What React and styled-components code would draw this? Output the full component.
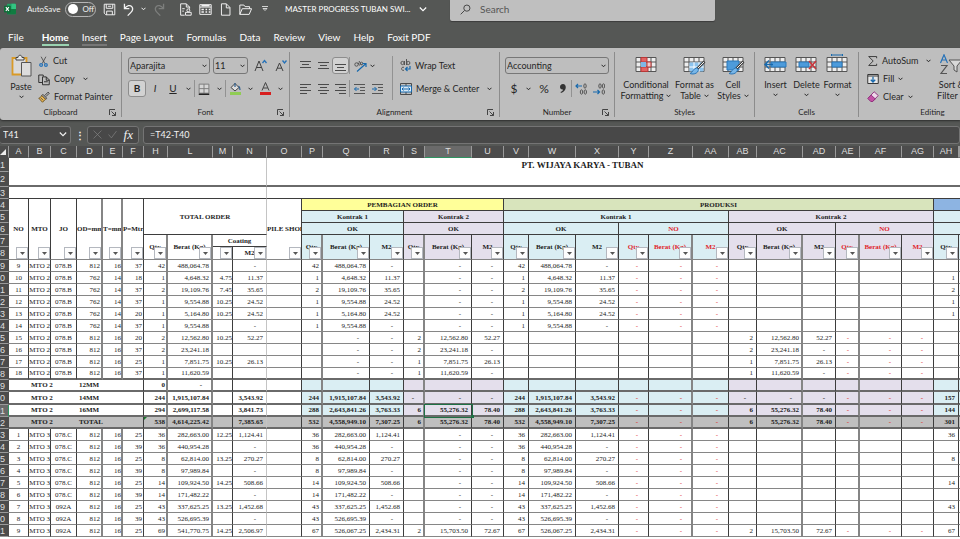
import React from "react";
import styled, { createGlobalStyle, css } from "styled-components";

const UI = `Lato, "Open Sans", sans-serif`;
const GREEN = "#1f7145";
const BLUE_FILL = "#daeef3";
const PURPLE_FILL = "#e4dfec";
const GREY_FILL = "#bfbfbf";
const RED = "#e0262c";

const Global = createGlobalStyle`
  * { box-sizing: border-box; }
  html, body { margin: 0; background: #fff; }
  button, input, select { font: inherit; color: inherit; margin: 0; padding: 0; border: 0; background: none; }
  svg { display: block; flex: none; }
`;

const Window = styled.div`
  height: 100vh;
  overflow: hidden;
  display: flex;
  flex-direction: column;
  font: 9px/12px ${UI};
  background: #555755;
  color: #f2f2f2;
`;

/* ---------- title bar ---------- */
const TitleBar = styled.header`
  display: flex;
  align-items: flex-start;
  height: 25px;
  padding-left: 4px;
`;
const TitleGroup = styled.div`
  display: flex;
  align-items: center;
  flex: none;
  height: 18px;
  gap: ${(p) => p.$gap || 8}px;
  width: ${(p) => p.$width}px;
`;
const AppLabel = styled.label`
  display: flex;
  align-items: center;
  gap: 5px;
  font-size: 8px;
  white-space: nowrap;
`;
const Toggle = styled.button`
  display: flex;
  align-items: center;
  gap: 4px;
  width: 31px;
  height: 15px;
  padding-left: 2px;
  border: 1px solid #b5b5b5;
  border-radius: 8px;
  font-size: 8px;
  &::before {
    content: "";
    width: 10px;
    height: 10px;
    border-radius: 50%;
    background: #fff;
  }
`;
const IconButton = styled.button`
  display: flex;
  align-items: center;
  justify-content: center;
  flex: none;
  width: ${(p) => p.$w || 12}px;
  height: 16px;
  opacity: ${(p) => (p.$off ? 0.25 : 1)};
`;
const DocTitle = styled.button`
  display: flex;
  align-items: center;
  gap: 8px;
  height: 18px;
  font-size: 8px;
  color: #fff;
  white-space: nowrap;
`;
const SearchBox = styled.label`
  display: flex;
  align-items: center;
  gap: 9px;
  flex: 0 0 265px;
  height: 21px;
  padding: 0 10px 3px;
  background: #bfbfbf;
  border-radius: 0 0 2px 2px;
  box-shadow: 0 1px 1px #3c3c3c;
  color: #444;
  input { flex: 1; min-width: 0; height: 17px; font-size: 10px; outline: none; }
  input::placeholder { color: #555; opacity: 1; }
`;

/* ---------- tabs ---------- */
const Tabs = styled.nav`
  display: flex;
  align-items: center;
  height: 23px;
  padding-left: 8px;
  gap: 13px;
  font-size: 10px;
`;
const Tab = styled.a`
  color: #fff;
  text-decoration: none;
  white-space: nowrap;
  line-height: 14px;
  padding-top: 3px;
  border-bottom: 2px solid ${(p) => p.$line || "transparent"};
  font-weight: ${(p) => (p.$on ? 700 : 400)};
  margin-right: ${(p) => (p.$first ? 5 : 0)}px;
`;

/* ---------- ribbon ---------- */
const Ribbon = styled.section`
  display: flex;
  flex: none;
  height: 72px;
  background: #bebebe;
  color: #262626;
  border-radius: 3px 0 0 3px;
  box-shadow: 0 1px 2px #2e2e2e;
  overflow: hidden;
  font-size: 9px;
`;
const Group = styled.div`
  flex: none;
  width: ${(p) => p.$width}px;
  margin: 4px 0 3px;
  display: flex;
  flex-direction: column;
  border-right: 1px solid #8c8c8c;
`;
const GroupBody = styled.div`
  flex: 1;
  display: flex;
  padding-left: ${(p) => p.$left || 0}px;
  gap: ${(p) => p.$gap || 0}px;
`;
const GroupFoot = styled.div`
  display: grid;
  grid-template-columns: 12px 1fr 12px;
  align-items: center;
  text-align: center;
  font-size: 8px;
  line-height: 10px;
`;
const Stack = styled.div`
  display: flex;
  flex-direction: column;
  gap: ${(p) => p.$gap || 0}px;
  padding-top: ${(p) => p.$top || 0}px;
`;
const Line = styled.div`
  display: flex;
  align-items: center;
  gap: ${(p) => p.$gap || 0}px;
  height: 17px;
`;
const Command = styled.button`
  display: flex;
  align-items: center;
  gap: 4px;
  height: ${(p) => p.$h || 18}px;
  white-space: nowrap;
  > span + svg { margin-left: 4px; }
`;
const BigCommand = styled.button`
  display: flex;
  flex-direction: column;
  align-items: center;
  flex: none;
  width: ${(p) => p.$w}px;
  padding-top: 2px;
  line-height: 11px;
  white-space: nowrap;
  svg + span { margin-top: 4px; }
  > svg:last-child { margin-top: 3px; }
`;
const CommandText = styled.span`
  display: flex;
  align-items: center;
  gap: 3px;
`;
const Tool = styled.button`
  display: flex;
  align-items: center;
  justify-content: center;
  flex: none;
  width: ${(p) => p.$w || 18}px;
  height: 17px;
  border-radius: 3px;
  font-size: ${(p) => p.$size || 11}px;
  line-height: 15px;
  ${(p) => p.$on && css`border: 1px solid #8d8d8d; background: #d2d2d2;`}
`;
const Divider = styled.span`
  flex: none;
  width: 1px;
  height: ${(p) => p.$h || 17}px;
  margin-top: ${(p) => p.$top || 0}px;
  background: #929292;
`;
const SelectBox = styled.label`
  position: relative;
  display: block;
  width: ${(p) => p.$w}px;
  select {
    appearance: none;
    width: 100%;
    height: 17px;
    padding: 0 1px;
    border: 1px solid #777;
    border-radius: 3px;
    font-size: 9px;
  }
  svg { position: absolute; right: 3px; top: 7px; pointer-events: none; }
`;

/* ---------- formula bar ---------- */
const FormulaBar = styled.div`
  display: flex;
  align-items: center;
  flex: none;
  height: 26px;
  padding-top: 3px;
  gap: 4px;
  font-size: 10px;
`;
const BarBox = styled.div`
  display: flex;
  align-items: center;
  justify-content: space-between;
  flex: ${(p) => (p.$grow ? "1" : "none")};
  width: ${(p) => (p.$grow ? "auto" : p.$w + "px")};
  height: 18px;
  padding: 0 ${(p) => p.$pad || 3}px;
  background: #484848;
  border: 1px solid #747474;
  border-radius: 3px;
  border-left-width: ${(p) => (p.$flush ? 0 : 1)}px;
  input { width: 100%; min-width: 0; height: 15px; font-size: 9px; outline: none; }
`;
const Fx = styled.span`
  font: italic 400 13px/14px "Liberation Serif", serif;
`;
const Dots = styled.span`
  width: 8px;
  text-align: center;
  font-weight: 700;
`;

/* ---------- sheet ---------- */
const SheetArea = styled.main`
  flex: 1;
  min-height: 0;
  overflow: hidden;
  background: #fff;
`;
const Sheet = styled.table`
  table-layout: fixed;
  width: 100%;
  min-width: 960px;
  border-collapse: separate;
  border-spacing: 0;
  color: #1c1c1c;
  font: 7px/10px "Liberation Serif", serif;
`;
const Col = styled.col`
  width: ${(p) => p.$w}px;
`;
const HeadRow = styled.tr`
  height: 12px;
`;
const Row = styled.tr`
  height: ${(p) => p.$h || 12}px;
`;
const ColHead = styled.th`
  padding: 0;
  background: ${(p) => (p.$on ? "#6a6a6a" : "#4c4c4c")};
  border-right: 1px solid #9a9a9a;
  border-bottom: 1px solid ${(p) => (p.$on ? "#2f9461" : "#4c4c4c")};
  color: #dedede;
  font: 400 9px/11px "Liberation Sans", sans-serif;
  overflow: hidden;
`;
const RowHead = styled.th`
  padding: 0;
  overflow: hidden;
  text-align: left;
  background: ${(p) => (p.$on ? "#6a6a6a" : "#4c4c4c")};
  border-right: 1px solid ${(p) => (p.$on ? "#2f9461" : "#4c4c4c")};
  border-bottom: 1px solid #9a9a9a;
  color: #dedede;
  font: 400 9px/10px "Liberation Sans", sans-serif;
`;
const Cell = styled.td`
  position: relative;
  padding: 0 ${(p) => p.$pad || 0}px 0 0;
  padding-left: ${(p) => (p.$align === "left" ? 2 : 0)}px;
  overflow: visible;
  white-space: nowrap;
  text-align: ${(p) => p.$align || "right"};
  font-weight: ${(p) => (p.$bold ? 700 : 400)};
  color: ${(p) => (p.$red ? RED : "inherit")};
  background: ${(p) => p.$fill || "transparent"};
  border-right: ${(p) =>
    p.$edge === "none" ? "0" : p.$edge === "soft" ? "1px solid #c4c4c4" : p.$edge === "wide" ? "2px solid #858585" : "1px solid #3d3d3d"};
  border-bottom: ${(p) =>
    p.$base === "none" ? "0" : p.$base === "thick" ? "2px solid #6a6a6a" : p.$base === "dark" ? "1px solid #3d3d3d" : "1px solid #868686"};
  ${(p) =>
    p.$selected &&
    css`
      outline: 1px solid ${GREEN};
      z-index: 1;
      &::after {
        content: "";
        position: absolute;
        right: -3px;
        bottom: -3px;
        width: 3px;
        height: 3px;
        background: ${GREEN};
      }
    `}
  ${(p) =>
    p.$flag &&
    css`
      &::before {
        content: "";
        position: absolute;
        left: 0;
        top: 0;
        border-top: 3px solid #197a2c;
        border-right: 3px solid transparent;
      }
    `}
`;
const HeadCell = styled(Cell).attrs({ as: "th", $align: "center", $bold: true })`
  overflow: hidden;
`;
const TitleCell = styled(HeadCell)`
  font-size: 9px;
  overflow: visible;
`;
const Filter = styled.button`
  position: absolute;
  right: 0;
  bottom: 0;
  width: 12px;
  height: 12px;
  background: #fdfdfd;
  border: 1px solid #b4b8bf;
  display: flex;
  align-items: center;
  justify-content: center;
`;

/* ---------- icons ---------- */
const Chevron = ({ s = 5, c = "currentColor" }) => (
  <svg width={s} height={s - 1} viewBox="0 0 10 7" fill="none" stroke={c} strokeWidth={s > 5 ? 1.4 : 2}>
    <path d="M1 1l4 4 4-4" />
  </svg>
);
const Ico = ({ w = 13, h = 13, vb = "0 0 16 16", c = "currentColor", sw = 1.2, children }) => (
  <svg width={w} height={h} viewBox={vb} fill="none" stroke={c} strokeWidth={sw}>
    {children}
  </svg>
);
const ExcelLogo = () => (
  <Ico w={12} h={12} sw={0}>
    <rect x="4" y="1" width="12" height="14" rx="1" fill="#21a366" />
    <path d="M10 1h5l1 1v6h-6z" fill="#33c481" />
    <path d="M4 8h12v6l-1 1H4z" fill="#107c41" />
    <rect x="0" y="3.500" width="9" height="9" rx="1" fill="#0f6d39" />
    <path d="M2.500 5.500l4 5M6.500 5.500l-4 5" stroke="#fff" strokeWidth="1.500" />
  </Ico>
);
const SaveIcon = () => (
  <Ico><path d="M1.500 1.500h13v13h-11l-2-2zM4 1.500v5h8v-5M4.500 14.500V10h7v4.500M6 4h4" /></Ico>
);
const UndoIcon = () => (
  <Ico sw={1.6}><path d="M3 1v6h6M3 7c3-4 7-5 9-2.500 2 2.500 1 5-1 7l-4 4" /></Ico>
);
const RedoIcon = () => (
  <Ico sw={1.6}><path d="M13 1v6H7M13 7c-3-4-7-5-9-2.500-2 2.500-1 5 1 7l4 4" /></Ico>
);
const PrintDocIcon = () => (
  <Ico>
    <path d="M7 15H2V1h7l4 4v2M9 1v4h4M4 7h3M4 10h2" />
    <circle cx="11.500" cy="9" r="1.800" />
    <path d="M8 11.500h7v3.500H8z" />
  </Ico>
);
const FormIcon = () => (
  <Ico>
    <path d="M1 2h14v12H1zM1 5h14" />
    <path d="M3 8h3M8 8h2M12 8h2M3 11h3M8 11h2M12 11h2M3 3.500h10" strokeWidth="1.800" />
  </Ico>
);
const NewDocIcon = () => (<Ico><path d="M3 1h6l4.500 4.500V15H3zM9 1v5h4.500" /></Ico>);
const OpenIcon = () => (
  <Ico><path d="M1 14V2.500h5l1.500 2H13V7M1 14l3-7h11.500l-3 7z" /></Ico>
);
const CustomizeIcon = () => (<Ico w={8} h={8} sw={1.6}><path d="M2 3h12M4 7l4 4 4-4z" /></Ico>);
const SearchIcon = () => (
  <Ico w={11} h={11} sw={1.400}><circle cx="10" cy="6" r="4.500" /><path d="M6.500 9.500L1 15" /></Ico>
);
const PasteIcon = () => (
  <svg width="21" height="23" viewBox="0 0 21 23" fill="none">
    <path d="M1.500 4h14v16.500h-14z" fill="#d9d9d9" stroke="#d99a26" strokeWidth="1.800" />
    <path d="M5 6V3.500h2c0-3 4-3 4 0h2V6z" fill="#e8e8e8" stroke="#444" />
    <path d="M10.500 8.500h9.500v13.500h-9.500z" fill="#dcdcdc" stroke="#555" />
  </svg>
);
const CutIcon = () => (
  <Ico w={11}>
    <path d="M4.500 1l5.500 10M11.500 1L6 11" stroke="#444" />
    <circle cx="4.500" cy="13" r="2" stroke="#2672b8" strokeWidth="1.800" />
    <circle cx="11.500" cy="13" r="2" stroke="#2672b8" strokeWidth="1.800" />
  </Ico>
);
const CopyIcon = () => (
  <Ico w={12}><path d="M6 12H1V2h6v2M6 4.500h5l4 4V15H6zM11 4.500V9h4M8 11h5" /></Ico>
);
const BrushIcon = () => (
  <Ico w={12} h={12}>
    <path d="M9 6l4.500-4.500 1.500 1.500L10.500 7.500M6.500 4.500l5 5-1.500 1.500-5-5z" stroke="#333" />
    <path d="M5 6l5 5-4 4L1 9.500C3 9 4 8 5 6z" fill="#ebb650" stroke="#6b521f" />
    <path d="M3.500 9l3.500 3.500" stroke="#555" />
  </Ico>
);
const FontStep = ({ up }) => (
  <svg width="13" height="13" viewBox="0 0 13 13" fill="none" stroke="#404040">
    <path d={up ? "M1 12L5 2l4 10M2.500 8.500h5" : "M2 12l3.500-8L9 12M3.200 9.200h4.600"} />
    <path d={up ? "M8.500 4l2-2.500 2 2.500" : "M8.500 1.500l2 2.500 2-2.500"} stroke="#2672b8" strokeWidth="1.300" />
  </svg>
);
const BordersIcon = () => (
  <Ico w={12} h={12}>
    <path d="M1.500 1.500h13v12h-13zM8 1.500v12M1.500 7.500h13" stroke="#777" fill="#d6d6d6" />
    <path d="M1 15h14" stroke="#222" strokeWidth="1.800" />
  </Ico>
);
const FillIcon = () => (
  <svg width="13" height="13" viewBox="0 0 13 13" fill="none">
    <path d="M2 5.500l4-4 4 4-4 3.500z" fill="#ddd" stroke="#444" />
    <path d="M6 1v4M9.500 4c1.500 1 1.500 2 1.500 4" stroke="#285a8c" strokeWidth="1.200" />
    <path d="M1 11.500h11" stroke="#90cc54" strokeWidth="3" />
  </svg>
);
const ColorIcon = () => (
  <svg width="13" height="13" viewBox="0 0 13 13" fill="none">
    <path d="M3 8.500l3.500-8 3.500 8M4.300 6h4.400" stroke="#444" />
    <path d="M1 11.500h11" stroke="#d81f1f" strokeWidth="3" />
  </svg>
);
const LinesIcon = ({ d }) => (
  <svg width="11" height="11" viewBox="0 0 11 11" stroke="#4a4a4a" fill="none"><path d={d} /></svg>
);
const IndentIcon = ({ right }) => (
  <svg width="11" height="11" viewBox="0 0 11 11" stroke="#555" fill="none">
    <path d="M0 1.500h11M6 4.500h5M6 7.500h5M0 10.500h11" />
    <path d={right ? "M0 6h4.500M2.500 4l2 2-2 2" : "M5 6H.5M2.500 4l-2 2 2 2"} stroke="#1769ad" />
  </svg>
);
const OrientIcon = () => (
  <svg width="13" height="12" viewBox="0 0 13 12" fill="none" stroke="#555">
    <circle cx="2.500" cy="4.500" r="1.700" /><path d="M4 2.500l1.500 3M5 1l2.500 4" /><circle cx="7.500" cy="3.500" r="1.300" />
    <path d="M3 11.500l9-8M8.500 3.500H12V7" stroke="#1769ad" strokeWidth="1.200" />
  </svg>
);
const WrapIcon = () => (
  <svg width="11" height="13" viewBox="0 0 11 13" fill="none" stroke="#555">
    <circle cx="2.500" cy="4" r="1.600" /><path d="M4.500 2v4M6.500 0v6" /><circle cx="8.300" cy="4" r="1.600" />
    <path d="M4 8.300c-3-1-3.500 3.700 0 3" />
    <path d="M10 7v3H5.500M7.500 8l-2 2 2 2" stroke="#1769ad" strokeWidth="1.200" />
  </svg>
);
const MergeIcon = () => (
  <svg width="12" height="12" viewBox="0 0 12 12" fill="none" stroke="#4a4a4a">
    <path d="M.5.5h11v11H.5zM6 .5v2.500M6 9v2.500" />
    <path d="M.5 3h11v6H.5z" fill="#d9e9f6" stroke="#1769ad" />
    <path d="M2 6h8M3.500 4.500L2 6l1.500 1.500M8.500 4.500L10 6 8.500 7.500" stroke="#1769ad" />
  </svg>
);
const DecimalIcon = ({ inc }) => (
  <svg width="12" height="12" viewBox="0 0 12 12" fill="none" stroke="#555">
    <ellipse cx={inc ? 10 : 7} cy="3" rx="1.200" ry="2.200" />
    {!inc && <ellipse cx="10.500" cy="3" rx="1.200" ry="2.200" />}
    {inc && <ellipse cx="6.500" cy="9" rx="1.200" ry="2.200" />}
    <ellipse cx="10.300" cy="9" rx="1.200" ry="2.200" />
    <path d={inc ? "M7 3H1M3 1L1 3l2 2" : "M0 9h6.500M4.500 7l2 2-2 2"} stroke="#1769ad" strokeWidth="1.200" />
  </svg>
);
const GridIcon = ({ children }) => (
  <svg width="23" height="21" viewBox="0 0 23 21" fill="none">
    <path d="M1 3.500h20v14H1z" fill="#eee" stroke="#555" />
    <path d="M1 8h20M1 13h20M6 3.500v14M11 3.500v14M16 3.500v14" stroke="#555" />
    {children}
  </svg>
);
const Brush = () => (
  <>
    <path d="M21.500 7.500L14 15" stroke="#444" strokeWidth="2.600" />
    <path d="M21 8l-6.500 6.500" stroke="#eee" />
    <path d="M13.500 14c2 .5 2.500 2 1 4-1.500 2-5 2.500-7.500 1.500 2.500-.5 3-5 6.500-5.500z" fill="#79b6e6" stroke="#2b78ba" />
  </>
);
const CondIcon = () => (
  <GridIcon>
    <path d="M6 3.500h6V8H6zM6 13h7v4.500H6z" fill="#e26464" stroke="#b93737" />
    <path d="M12 8h4v5h-4z" fill="#f3c9c9" stroke="#b93737" />
    <path d="M6 8h5v5H6z" fill="#7fb7e6" />
  </GridIcon>
);
const TableIcon = () => (<GridIcon><path d="M6.500 8.500h14v9h-14z" fill="#8cc3ee" /><path d="M6 13h15M11 8v10M16 8v10" stroke="#fff" /><Brush /></GridIcon>);
const StylesIcon = () => (<GridIcon><path d="M5 7h12v9H5z" fill="#4d9bdb" stroke="#2b78ba" /><Brush /></GridIcon>);
const InsertIcon = () => (<GridIcon><path d="M7 8h15v5H7z" fill="#4d9bdb" stroke="#2b78ba" /><path d="M1 10.500h8M5 6.500l-4 4 4 4" stroke="#1769ad" strokeWidth="1.500" /></GridIcon>);
const DeleteIcon = () => (<GridIcon><path d="M4 8h10v5H4z" fill="#4d9bdb" stroke="#2b78ba" /><path d="M14 7l7 8M21 7l-7 8" stroke="#c8353b" strokeWidth="1.600" /></GridIcon>);
const FormatIcon = () => (<GridIcon><path d="M6 8h10v5H6z" fill="#4d9bdb" stroke="#2b78ba" /><path d="M5.500 1h11M5.500 0v2M16.500 0v2" stroke="#1769ad" /></GridIcon>);
const SigmaIcon = () => (<Ico w={11} h={12}><path d="M14 4V1.500H2.500L9 8l-6.500 6.500H14V12" /></Ico>);
const FillDownIcon = () => (
  <Ico w={12} h={12}><path d="M1 2h14v12H1z" fill="#e8e8e8" /><path d="M1 4h14" /><path d="M8 5v7M5 9l3 3 3-3" stroke="#1769ad" strokeWidth="1.700" /></Ico>
);
const EraserIcon = () => (
  <Ico w={12} h={12}>
    <path d="M9.500 1l5.500 5-7.500 8L2 9z" fill="#eed9ea" stroke="#8b2a78" />
    <path d="M5.500 5.500l5.500 5-3.500 3.500H5L1 10z" fill="#c452a6" stroke="#8b2a78" />
  </Ico>
);
const SortIcon = () => (
  <svg width="24" height="21" viewBox="0 0 24 21" fill="none">
    <path d="M1.500 9L5 .8 8.500 9M2.800 6h4.400" stroke="#2672b8" strokeWidth="1.200" />
    <path d="M2 11.500h6l-6 8h6" stroke="#555" strokeWidth="1.200" />
    <path d="M10 6h13l-5 6v6l-3-2v-4z" fill="#d8d8d8" stroke="#555" />
  </svg>
);
const Launcher = () => (
  <svg width="7" height="7" viewBox="0 0 7 7" fill="none" stroke="#444"><path d="M.5 6V.5H6M2.500 2.500l4 4M6.500 3v3.500H3" /></svg>
);

function RibbonGroup({ width, left, gap, name, launch, children }) {
  return (
    <Group $width={width}>
      <GroupBody $left={left} $gap={gap}>{children}</GroupBody>
      <GroupFoot>
        <span />
        <span>{name}</span>
        {launch ? <button aria-label={name + " settings"}><Launcher /></button> : <span />}
      </GroupFoot>
    </Group>
  );
}
function Big({ w, icon, text, second }) {
  return (
    <BigCommand $w={w}>
      {icon}
      <span>{text}</span>
      {second ? <CommandText>{second}<Chevron /></CommandText> : <Chevron />}
    </BigCommand>
  );
}
function Picker({ w, label, value }) {
  return (
    <SelectBox $w={w}>
      <select aria-label={label} defaultValue={value}><option>{value}</option></select>
      <Chevron />
    </SelectBox>
  );
}

/* ---------- sheet data ---------- */
const COLS = [
  ["A", 20], ["B", 22], ["C", 26], ["D", 26, 1], ["E", 20, 1], ["F", 21], ["H", 24, 1], ["L", 45, 1], ["M", 20], ["N", 34],
  ["O", 35], ["P", 21, 1], ["Q", 47], ["R", 34], ["S", 21, 1], ["T", 47], ["U", 32], ["V", 25], ["W", 47], ["X", 43],
  ["Y", 30], ["Z", 44, 1], ["AA", 36], ["AB", 28], ["AC", 46, 1], ["AD", 33], ["AE", 24, 1], ["AF", 42], ["AG", 32], ["AH", 25],
];
const NONE = ["", "", ""];
const DASH = ["-", "-", "-"];
const rest = (k1, k2, ah) => [
  ...(k1 || ["", "-", "-"]), ...(k2 || ["", "-", "-"]),
  ...(k1 || NONE), ...(k1 ? DASH : NONE), ...(k2 || NONE), ...(k2 ? DASH : NONE), ah,
];
const item = (row, no, mto, jo, od, t, p, h, l, m, n, k1, k2, ah = "") => ({
  row, cells: [no, mto, jo, od, t, p, h, l, m, n, "", ...rest(k1, k2, ah)],
});
const first = [
  item(29, 9, "MTO 2", "078.B", 812, 16, 37, 42, "488,064.78", "", "-", ["42", "488,064.78", "-"]),
  item(30, 10, "MTO 2", "078.B", 762, 14, 18, 1, "4,648.32", "4.75", "11.37", ["1", "4,648.32", "11.37"], null, "1"),
  item(31, 11, "MTO 2", "078.B", 762, 14, 37, 2, "19,109.76", "7.45", "35.65", ["2", "19,109.76", "35.65"], null, "2"),
  item(32, 12, "MTO 2", "078.B", 762, 14, 37, 1, "9,554.88", "10.25", "24.52", ["1", "9,554.88", "24.52"], null, "1"),
  item(33, 13, "MTO 2", "078.B", 762, 14, 20, 1, "5,164.80", "10.25", "24.52", ["1", "5,164.80", "24.52"], null, "1"),
  item(34, 14, "MTO 2", "078.B", 762, 14, 37, 1, "9,554.88", "", "-", ["1", "9,554.88", "-"]),
  item(35, 15, "MTO 2", "078.B", 812, 16, 20, 2, "12,562.80", "10.25", "52.27", null, ["2", "12,562.80", "52.27"]),
  item(36, 16, "MTO 2", "078.B", 812, 16, 37, 2, "23,241.18", "", "", null, ["2", "23,241.18", "-"]),
  item(37, 17, "MTO 2", "078.B", 812, 16, 25, 1, "7,851.75", "10.25", "26.13", null, ["1", "7,851.75", "26.13"]),
  item(38, 18, "MTO 2", "078.B", 812, 16, 37, 1, "11,620.59", "", "", null, ["1", "11,620.59", "-"]),
];
const sum = (row, label, own, k1, k2, red, ah) => ({
  row, label, cells: [...own, "", ...k1, ...k2, ...k1, ...red, ...k2, ...red, ah],
});
const totals = [
  sum(39, "12MM", ["0", "-", "", ""], NONE, NONE, NONE, ""),
  sum(40, "14MM", ["244", "1,915,107.84", "", "3,543.92"], ["244", "1,915,107.84", "3,543.92"], DASH, DASH, "157"),
  sum(41, "16MM", ["294", "2,699,117.58", "", "3,841.73"], ["288", "2,643,841.26", "3,763.33"], ["6", "55,276.32", "78.40"], DASH, "144"),
  sum(42, "TOTAL", ["538", "4,614,225.42", "", "7,385.65"], ["532", "4,558,949.10", "7,307.25"], ["6", "55,276.32", "78.40"], DASH, "301"),
];
const second = [
  item(43, 1, "MTO 3", "078.C", 812, 16, 25, 36, "282,663.00", "12.25", "1,124.41", ["36", "282,663.00", "1,124.41"], null, "36"),
  item(44, 2, "MTO 3", "078.C", 812, 16, 39, 36, "440,954.28", "", "-", ["36", "440,954.28", "-"]),
  item(45, 3, "MTO 3", "078.C", 812, 16, 25, 8, "62,814.00", "13.25", "270.27", ["8", "62,814.00", "270.27"], null, "8"),
  item(46, 4, "MTO 3", "078.C", 812, 16, 39, 8, "97,989.84", "", "-", ["8", "97,989.84", "-"]),
  item(47, 5, "MTO 3", "078.C", 812, 16, 25, 14, "109,924.50", "14.25", "508.66", ["14", "109,924.50", "508.66"], null, "14"),
  item(48, 6, "MTO 3", "078.C", 812, 16, 39, 14, "171,482.22", "", "-", ["14", "171,482.22", "-"]),
  item(49, 7, "MTO 3", "092A", 812, 16, 25, 43, "337,625.25", "13.25", "1,452.68", ["43", "337,625.25", "1,452.68"], null, "43"),
  item(50, 8, "MTO 3", "092A", 812, 16, 39, 43, "526,695.39", "", "-", ["43", "526,695.39", "-"]),
  item(51, 9, "MTO 3", "092A", 812, 16, 25, 69, "541,770.75", "14.25", "2,506.97", ["67", "526,067.25", "2,434.31"], ["2", "15,703.50", "72.67"], "67"),
];

const edgeOf = (i) => (COLS[i][0] === "N" ? "soft" : COLS[i][2] ? "wide" : "thin");
const isRed = (i) => (i >= 20 && i <= 22) || (i >= 26 && i <= 28);
const tintOf = (i) => {
  if (i < 11) return undefined;
  if ((i >= 14 && i <= 16) || (i >= 23 && i <= 28)) return PURPLE_FILL;
  return BLUE_FILL;
};
const padOf = (i, v) => {
  if (v === "-") return COLS[i][2] ? 9 : 10;
  if (i === 3 || i === 5 || i === 6) return 1;
  if (i === 4 || i === 8 || i === 1) return 0;
  return COLS[i][2] ? 2 : 3;
};

function DataRow({ data, base }) {
  return (
    <Row>
      <RowHead scope="row">{data.row % 10}</RowHead>
      {data.cells.map((v, i) => (
        <Cell
          key={i}
          $align={i === 0 || i === 2 ? "center" : undefined}
          $pad={i === 0 || i === 2 ? 0 : padOf(i, v)}
          $red={isRed(i)}
          $edge={edgeOf(i)}
          $base={base}
        >
          {v}
        </Cell>
      ))}
      <Cell $edge="none" $base={base} />
    </Row>
  );
}
function TotalRow({ data }) {
  const grey = data.label === "TOTAL";
  const own = grey ? GREY_FILL : undefined;
  return (
    <Row $h={data.row === 40 ? 13 : 12}>
      <RowHead scope="row" $on={data.row === 41}>{data.row % 10}</RowHead>
      <Cell $fill={own} $edge="none" $base="thick" />
      <Cell colSpan={2} $fill={own} $edge="none" $base="thick" $align="left" $bold>MTO 2</Cell>
      <Cell colSpan={3} $fill={own} $base="thick" $align="left" $bold>{data.label}</Cell>
      {data.cells.map((v, k) => {
        const i = k + 6;
        return (
          <Cell
            key={i}
            $bold
            $pad={padOf(i, v)}
            $red={isRed(i)}
            $edge={edgeOf(i)}
            $base="thick"
            $fill={grey ? GREY_FILL : tintOf(i)}
            $selected={data.row === 41 && COLS[i][0] === "T"}
            $flag={grey && i === 6}
          >
            {v}
          </Cell>
        );
      })}
      <Cell $edge="none" $base="thick" $fill={grey ? GREY_FILL : BLUE_FILL} />
    </Row>
  );
}
const FilterButton = ({ col }) => (
  <Filter aria-label={"Filter column " + col}>
    <svg width="5" height="3" viewBox="0 0 5 3"><path d="M0 0h5L2.500 3z" fill="#555" /></svg>
  </Filter>
);

const measure = ["Qty", "Berat (Kg)", "M2"];

function HeadingRows() {
  const left = ["NO", "MTO", "JO", "OD=mm", "T=mm", "P=Mtr"];
  return (
    <>
      <Row $h={14}>
        <RowHead>1</RowHead>
        <Cell colSpan={10} $edge="soft" $base="none" />
        <Cell colSpan={6} $edge="none" $base="none" />
        <TitleCell colSpan={6} $edge="none" $base="none">PT. WIJAYA KARYA - TUBAN</TitleCell>
        <Cell colSpan={9} $edge="none" $base="none" />
      </Row>
      <Row $h={15}>
        <RowHead>2</RowHead>
        <Cell colSpan={10} $edge="soft" $base="thick" />
        <Cell colSpan={21} $edge="none" $base="thick" />
      </Row>
      <Row>
        <RowHead>3</RowHead>
        <Cell colSpan={10} $edge="soft" $base="dark" />
        <Cell colSpan={21} $edge="none" $base="dark" />
      </Row>
      <Row>
        <RowHead>4</RowHead>
        {left.map((t, i) => (
          <HeadCell key={t} rowSpan={5} $edge={edgeOf(i)}>{t}<FilterButton col={COLS[i][0]} /></HeadCell>
        ))}
        <HeadCell colSpan={4} rowSpan={3} $edge="soft" $base="dark">TOTAL ORDER</HeadCell>
        <HeadCell rowSpan={5}>PILE SHOE<FilterButton col="O" /></HeadCell>
        <HeadCell colSpan={6} $fill="#ffff99" $base="dark">PEMBAGIAN ORDER</HeadCell>
        <HeadCell colSpan={12} $fill="#d8e4bc" $base="dark">PRODUKSI</HeadCell>
        <HeadCell colSpan={2} $fill="#8db4e2" $edge="none" $base="dark" />
      </Row>
      <Row>
        <RowHead>5</RowHead>
        <HeadCell colSpan={3} $fill={BLUE_FILL} $base="dark">Kontrak 1</HeadCell>
        <HeadCell colSpan={3} $fill={PURPLE_FILL} $base="dark">Kontrak 2</HeadCell>
        <HeadCell colSpan={6} $fill={BLUE_FILL} $base="dark">Kontrak 1</HeadCell>
        <HeadCell colSpan={6} $fill={PURPLE_FILL} $base="dark">Kontrak 2</HeadCell>
        <HeadCell colSpan={2} $fill={BLUE_FILL} $edge="none" $base="dark" />
      </Row>
      <Row>
        <RowHead>6</RowHead>
        {[BLUE_FILL, PURPLE_FILL, BLUE_FILL, BLUE_FILL, PURPLE_FILL, PURPLE_FILL].map((fill, k) => {
          const no = k === 3 || k === 5;
          return <HeadCell key={k} colSpan={3} $fill={fill} $red={no} $base="dark">{no ? "NO" : "OK"}</HeadCell>;
        })}
        <HeadCell colSpan={2} $fill={BLUE_FILL} $edge="none" $base="dark" />
      </Row>
      <Row>
        <RowHead>7</RowHead>
        <HeadCell rowSpan={2} $edge="wide">Qty<FilterButton col="H" /></HeadCell>
        <HeadCell rowSpan={2} $edge="wide">Berat (Kg)<FilterButton col="L" /></HeadCell>
        <HeadCell colSpan={2} $edge="soft" $base="dark">Coating</HeadCell>
        {COLS.slice(11).map(([name], k) => (
          <HeadCell key={name} rowSpan={2} $fill={tintOf(k + 11)} $red={isRed(k + 11)} $edge={edgeOf(k + 11)}>
            {measure[k % 3]}
            <FilterButton col={name} />
          </HeadCell>
        ))}
        <HeadCell rowSpan={2} $edge="none" $fill={BLUE_FILL} />
      </Row>
      <Row $h={13}>
        <RowHead>8</RowHead>
        <HeadCell><FilterButton col="M" /></HeadCell>
        <HeadCell $edge="soft">M2<FilterButton col="N" /></HeadCell>
      </Row>
    </>
  );
}

export default function App() {
  return (
    <Window>
      <Global />
      <TitleBar>
        <TitleGroup $width={99} $gap={11}>
          <ExcelLogo />
          <AppLabel>AutoSave<Toggle role="switch" aria-checked="false">Off</Toggle></AppLabel>
        </TitleGroup>
        <TitleGroup $width={76} $gap={7}>
          <IconButton aria-label="Save"><SaveIcon /></IconButton>
          <IconButton aria-label="Undo"><UndoIcon /></IconButton>
          <Chevron />
          <IconButton aria-label="Redo" $off><RedoIcon /></IconButton>
        </TitleGroup>
        <TitleGroup $width={106} $gap={8}>
          <IconButton aria-label="Print preview"><PrintDocIcon /></IconButton>
          <IconButton aria-label="Form"><FormIcon /></IconButton>
          <IconButton aria-label="New"><NewDocIcon /></IconButton>
          <IconButton aria-label="Open"><OpenIcon /></IconButton>
          <IconButton aria-label="Customize toolbar"><CustomizeIcon /></IconButton>
        </TitleGroup>
        <TitleGroup $width={165}>
          <DocTitle>MASTER PROGRESS TUBAN SWI...<Chevron s={8} /></DocTitle>
        </TitleGroup>
        <SearchBox>
          <SearchIcon />
          <input type="search" placeholder="Search" aria-label="Search" />
        </SearchBox>
      </TitleBar>

      <Tabs>
        <Tab href="#file" $first>File</Tab>
        <Tab href="#home" $on $line="#9ad3b1">Home</Tab>
        <Tab href="#insert" $line="#777">Insert</Tab>
        {["Page Layout", "Formulas", "Data", "Review", "View", "Help", "Foxit PDF"].map((t) => (
          <Tab key={t} href={"#" + t.toLowerCase().replace(" ", "-")}>{t}</Tab>
        ))}
      </Tabs>

      <Ribbon>
        <RibbonGroup width={122} name="Clipboard" launch left={4}>
          <BigCommand $w={34}>
            <PasteIcon />
            <span>Paste</span>
            <Chevron />
          </BigCommand>
          <Stack>
            <Command><CutIcon />Cut</Command>
            <Command><CopyIcon /><span>Copy</span><Chevron /></Command>
            <Command><BrushIcon />Format Painter</Command>
          </Stack>
        </RibbonGroup>

        <RibbonGroup width={168} name="Font" launch left={6}>
          <Stack $top={5} $gap={6}>
            <Line $gap={3}>
              <Picker w={82} label="Font" value="Aparajita" />
              <Picker w={35} label="Font size" value="11" />
              <Tool aria-label="Increase font size"><FontStep up /></Tool>
              <Tool $w={16} aria-label="Decrease font size"><FontStep /></Tool>
            </Line>
            <Line>
              <Tool $on $size={10}><b>B</b></Tool>
              <Tool $size={10}><i>I</i></Tool>
              <Tool $size={10}><u>U</u></Tool>
              <Tool $w={12} aria-label="Underline styles"><Chevron /></Tool>
              <Divider />
              <Tool aria-label="Borders"><BordersIcon /></Tool>
              <Tool $w={12} aria-label="Border styles"><Chevron /></Tool>
              <Divider />
              <Tool aria-label="Fill colour"><FillIcon /></Tool>
              <Tool $w={12} aria-label="Fill colours"><Chevron /></Tool>
              <Tool aria-label="Font colour"><ColorIcon /></Tool>
              <Tool $w={12} aria-label="Font colours"><Chevron /></Tool>
            </Line>
          </Stack>
        </RibbonGroup>

        <RibbonGroup width={210} name="Alignment" launch left={6}>
          <Stack $top={5} $gap={6}>
            <Line>
              <Tool aria-label="Top align"><LinesIcon d="M0 1.500h11M2 4.500h7M0 7.500h11" /></Tool>
              <Tool aria-label="Middle align"><LinesIcon d="M0 2.500h11M2 5.500h7M0 8.500h11" /></Tool>
              <Tool aria-label="Bottom align" $on $w={17}><LinesIcon d="M0 4.500h11M2 7.500h7M0 10.500h11" /></Tool>
              <Divider />
              <Tool aria-label="Orientation" $w={20}><OrientIcon /></Tool>
              <Chevron />
            </Line>
            <Line>
              <Tool aria-label="Align left"><LinesIcon d="M0 1.500h11M0 4.500h7M0 7.500h11M0 10.500h7" /></Tool>
              <Tool aria-label="Centre"><LinesIcon d="M0 1.500h11M2 4.500h7M0 7.500h11M2 10.500h7" /></Tool>
              <Tool aria-label="Align right" $w={17}><LinesIcon d="M0 1.500h11M4 4.500h7M0 7.500h11M4 10.500h7" /></Tool>
              <Divider />
              <Tool aria-label="Decrease indent"><IndentIcon /></Tool>
              <Tool aria-label="Increase indent"><IndentIcon right /></Tool>
            </Line>
          </Stack>
          <GroupBody $left={6} $gap={7}>
            <Divider $h={44} $top={4} />
            <Stack $top={5} $gap={6}>
              <Command $h={17}><WrapIcon />Wrap Text</Command>
              <Command $h={17}><MergeIcon /><span>Merge &amp; Center</span><Chevron /></Command>
            </Stack>
          </GroupBody>
        </RibbonGroup>

        <RibbonGroup width={115} name="Number" launch left={5}>
          <Stack $top={5} $gap={6}>
            <Picker w={104} label="Number format" value="Accounting" />
            <Line>
              <Tool $size={12}>$</Tool>
              <Tool $w={10} aria-label="Currencies"><Chevron /></Tool>
              <Tool $w={22} $size={12}>%</Tool>
              <Tool $w={16} aria-label="Comma style">
                <svg width="6" height="9" viewBox="0 0 6 9"><path d="M3 0c4 0 4 7-2 9l-.5-1C2 7.500 3 6.500 3 5.500-1 6-1 0 3 0z" fill="#333" /></svg>
              </Tool>
              <Divider />
              <Tool aria-label="Increase decimal"><DecimalIcon inc /></Tool>
              <Tool aria-label="Decrease decimal"><DecimalIcon /></Tool>
            </Line>
          </Stack>
        </RibbonGroup>

        <RibbonGroup width={140} name="Styles" left={4}>
          <Big w={54} icon={<CondIcon />} text="Conditional" second="Formatting" />
          <Big w={43} icon={<TableIcon />} text="Format as" second="Table" />
          <Big w={34} icon={<StylesIcon />} text="Cell" second="Styles" />
        </RibbonGroup>

        <RibbonGroup width={104} name="Cells" left={5}>
          <Big w={31} icon={<InsertIcon />} text="Insert" />
          <Big w={31} icon={<DeleteIcon />} text="Delete" />
          <Big w={31} icon={<FormatIcon />} text="Format" />
        </RibbonGroup>

        <RibbonGroup width={148} name="Editing" left={8} gap={2}>
          <Stack>
            <Command><SigmaIcon /><span>AutoSum</span><Chevron /></Command>
            <Command><FillDownIcon />Fill<Chevron /></Command>
            <Command><EraserIcon />Clear<Chevron /></Command>
          </Stack>
          <Big w={36} icon={<SortIcon />} text="Sort &amp;" second="Filter" />
        </RibbonGroup>
      </Ribbon>

      <FormulaBar>
        <BarBox $w={71} $flush><input aria-label="Name box" defaultValue="T41" /><Chevron s={8} /></BarBox>
        <Dots>⋮</Dots>
        <BarBox $w={52} $pad={5}>
          <Ico w={9} h={9} c="#858585"><path d="M1 1l14 14M15 1L1 15" /></Ico>
          <Ico w={11} h={9} c="#858585"><path d="M1 8l5 6L15 2" /></Ico>
          <Fx>fx</Fx>
        </BarBox>
        <BarBox $grow $pad={6}><input aria-label="Formula" defaultValue="=T42-T40" /></BarBox>
      </FormulaBar>

      <SheetArea>
        <Sheet>
          <colgroup>
            <Col $w={9} />
            {COLS.map(([name, w]) => <Col key={name} $w={w} />)}
            <col />
          </colgroup>
          <thead>
            <HeadRow>
              <ColHead>
                <svg width="6" height="6" viewBox="0 0 6 6"><path d="M6 0v6H0z" fill="#eee" /></svg>
              </ColHead>
              {COLS.map(([name]) => <ColHead key={name} $on={name === "T"}>{name}</ColHead>)}
              <ColHead />
            </HeadRow>
          </thead>
          <tbody>
            <HeadingRows />
            {first.map((d) => <DataRow key={d.row} data={d} base={d.row === 38 ? "thick" : undefined} />)}
            {totals.map((d) => <TotalRow key={d.row} data={d} />)}
            {second.map((d) => <DataRow key={d.row} data={d} />)}
          </tbody>
        </Sheet>
      </SheetArea>
    </Window>
  );
}
